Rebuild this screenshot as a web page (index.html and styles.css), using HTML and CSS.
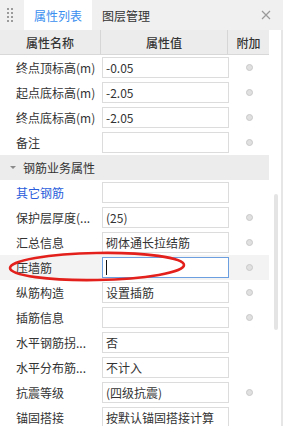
FILE: index.html
```html
<!DOCTYPE html>
<html>
  <head>
    <title>属性列表</title>
    <link rel="stylesheet" href="styles.css">
  </head>
  <body>
    <div class="panel">
      <div class="tabs">
        <div class="grip">
          <span></span><span></span><span></span><span></span>
          <span></span><span></span><span></span><span></span>
        </div>
        <div class="tab active">属性列表</div>
        <div class="tab">图层管理</div>
        <div class="close">
          <svg width="10" height="10" viewBox="0 0 10 10">
            <path d="M1 1L9 9M9 1L1 9" stroke="#9a9a9a" stroke-width="1.2" fill="none"/>
          </svg>
        </div>
      </div>

      <div class="main">
        <div class="table">
          <div class="head">
            <div class="hcell">属性名称</div>
            <div class="hcell">属性值</div>
            <div class="hcell last">附加</div>
          </div>

          <div class="row">
            <div class="name">终点顶标高(m)</div>
            <div class="val">-0.05</div>
            <div class="extra"><i class="dot"></i></div>
          </div>
          <div class="row">
            <div class="name">起点底标高(m)</div>
            <div class="val">-2.05</div>
            <div class="extra"><i class="dot"></i></div>
          </div>
          <div class="row">
            <div class="name">终点底标高(m)</div>
            <div class="val">-2.05</div>
            <div class="extra"><i class="dot"></i></div>
          </div>
          <div class="row">
            <div class="name">备注</div>
            <div class="val"></div>
            <div class="extra"><i class="dot"></i></div>
          </div>

          <div class="group">
            <span class="caret"></span>
            钢筋业务属性
          </div>

          <div class="row">
            <div class="name link">其它钢筋</div>
            <div class="val"></div>
            <div class="extra"></div>
          </div>
          <div class="row">
            <div class="name">保护层厚度(...</div>
            <div class="val">(25)</div>
            <div class="extra"><i class="dot"></i></div>
          </div>
          <div class="row">
            <div class="name">汇总信息</div>
            <div class="val">砌体通长拉结筋</div>
            <div class="extra"><i class="dot"></i></div>
          </div>
          <div class="row current">
            <div class="name">压墙筋</div>
            <div class="val focus"><span class="cursor"></span></div>
            <div class="extra"><i class="dot"></i></div>
          </div>
          <div class="row">
            <div class="name">纵筋构造</div>
            <div class="val">设置插筋</div>
            <div class="extra"><i class="dot"></i></div>
          </div>
          <div class="row">
            <div class="name">插筋信息</div>
            <div class="val"></div>
            <div class="extra"><i class="dot"></i></div>
          </div>
          <div class="row">
            <div class="name">水平钢筋拐...</div>
            <div class="val">否</div>
            <div class="extra"></div>
          </div>
          <div class="row">
            <div class="name">水平分布筋...</div>
            <div class="val">不计入</div>
            <div class="extra"></div>
          </div>
          <div class="row">
            <div class="name">抗震等级</div>
            <div class="val">(四级抗震)</div>
            <div class="extra"><i class="dot"></i></div>
          </div>
          <div class="row">
            <div class="name">锚固搭接</div>
            <div class="val">按默认锚固搭接计算</div>
            <div class="extra"></div>
          </div>
        </div>

        <div class="scroll">
          <div class="thumb"></div>
        </div>
      </div>

      <!-- red mark drawn over the 压墙筋 row -->
      <svg class="mark" width="283" height="426" viewBox="0 0 283 426">
        <ellipse cx="97" cy="266.5" rx="87" ry="13.5" transform="rotate(-1 97 266.5)"
                 fill="none" stroke="#e3201b" stroke-width="2.6"/>
      </svg>
    </div>
  </body>
</html>
```

FILE: styles.css
```css
body {
  margin: 0;
  font-family: "Noto Sans CJK SC", "Noto Sans", sans-serif;
  font-size: 12px;
  color: #333333;
  background-color: #ffffff;
}

.panel {
  position: relative;
  width: 283px;
  height: 426px;
  overflow: hidden;
}

/* tab bar */
.tabs {
  display: flex;
  align-items: stretch;
  height: 30px;
  background-color: #f0f0f0;
}

.grip {
  display: grid;
  grid-template-columns: 2px 2px;
  grid-auto-rows: 2px;
  column-gap: 2px;
  row-gap: 2px;
  align-content: center;
  width: 24px;
  padding-left: 7px;
  box-sizing: border-box;
}

.grip span {
  background-color: #9b9b9b;
}

.tab {
  display: flex;
  align-items: center;
  padding: 0 10px;
  font-size: 12px;
  color: #333333;
  white-space: nowrap;
}

.tab.active {
  background-color: #ffffff;
  color: #3a8ef0;
  width: 68px;
  box-sizing: border-box;
}

.close {
  display: flex;
  align-items: center;
  margin-left: auto;
  padding-right: 12px;
}

/* property table */
.main {
  display: flex;
}

.table {
  width: 269px;
}

.head {
  display: grid;
  grid-template-columns: 101px 127px 41px;
  height: 24px;
  background-color: #ececec;
  border-bottom: 1px solid #d8d8d8;
}

.hcell {
  display: flex;
  align-items: center;
  justify-content: center;
  border-right: 1px solid #d6d6d6;
  color: #333333;
  font-weight: 500;
}

.hcell.last {
  border-right: none;
}

.row {
  display: grid;
  grid-template-columns: 102px 127px 40px;
  align-items: center;
  height: 25px;
}

.row.current {
  background-color: #f3f3f3;
}

.name {
  padding-left: 16px;
  white-space: nowrap;
  overflow: hidden;
}

.name.link {
  color: #2a5ddb;
}

.val {
  display: flex;
  align-items: center;
  height: 21px;
  padding-left: 3px;
  border: 1px solid #dcdcdc;
  background-color: #ffffff;
  box-sizing: border-box;
  white-space: nowrap;
  overflow: hidden;
}

.val.focus {
  border-color: #6b9fe0;
}

.cursor {
  width: 1px;
  height: 15px;
  background-color: #111111;
}

.extra {
  display: flex;
  justify-content: center;
}

.dot {
  width: 7px;
  height: 7px;
  border-radius: 50%;
  background-color: #e0e0e0;
  border: 1px solid #c9c9c9;
  box-sizing: border-box;
}

.group {
  display: flex;
  align-items: center;
  gap: 7px;
  height: 25px;
  padding-left: 10px;
  background-color: #ececec;
  color: #333333;
}

.caret {
  width: 0;
  height: 0;
  border-left: 3px solid transparent;
  border-right: 3px solid transparent;
  border-top: 3px solid #8a8a8a;
}

/* scrollbar */
.scroll {
  width: 14px;
  padding-left: 5px;
  box-sizing: border-box;
  border-right: 2px solid #e6e6e6;
}

.thumb {
  width: 4px;
  height: 136px;
  margin-top: 164px;
  border-radius: 2px;
  background-color: #e4e4e4;
}

.mark {
  position: absolute;
  left: 0;
  top: 0;
  pointer-events: none;
}
```
